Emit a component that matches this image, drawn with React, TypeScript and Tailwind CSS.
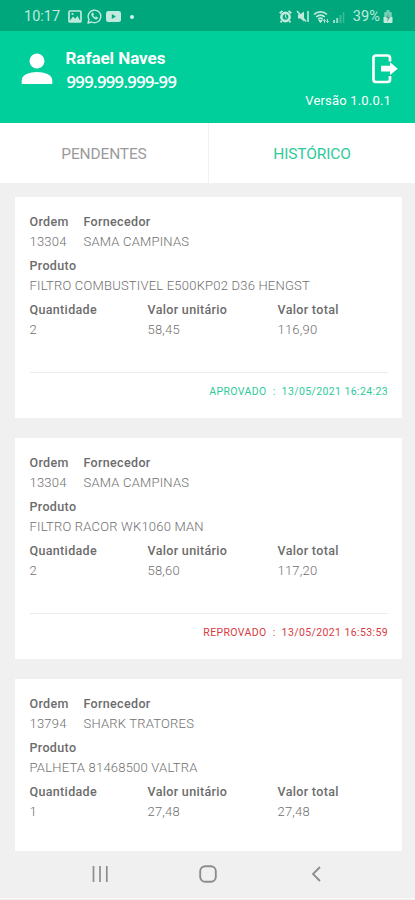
import React from "react";

type Order = {
  ordem: string;
  fornecedor: string;
  produto: string;
  quantidade: string;
  unitario: string;
  total: string;
  status?: { label: string; date: string; tone: string };
};

const orders: Order[] = [
  {
    ordem: "13304",
    fornecedor: "SAMA CAMPINAS",
    produto: "FILTRO COMBUSTIVEL E500KP02 D36 HENGST",
    quantidade: "2",
    unitario: "58,45",
    total: "116,90",
    status: { label: "APROVADO", date: "13/05/2021 16:24:23", tone: "text-[#2ccb9b]" },
  },
  {
    ordem: "13304",
    fornecedor: "SAMA CAMPINAS",
    produto: "FILTRO RACOR WK1060 MAN",
    quantidade: "2",
    unitario: "58,60",
    total: "117,20",
    status: { label: "REPROVADO", date: "13/05/2021 16:53:59", tone: "text-[#d83a40]" },
  },
  {
    ordem: "13794",
    fornecedor: "SHARK TRATORES",
    produto: "PALHETA 81468500 VALTRA",
    quantidade: "1",
    unitario: "27,48",
    total: "27,48",
  },
];

function Field({ label, value, className = "" }: { label: string; value: string; className?: string }) {
  return (
    <div className={`whitespace-nowrap ${className}`}>
      <div className="h-5 text-[12.5px] font-medium leading-5 tracking-[0.34px] text-[#6c6c6c]">{label}</div>
      <div className="h-5 text-[13px] font-light leading-[19px] tracking-[0.21px] text-[#707070]">{value}</div>
    </div>
  );
}

function OrderCard({ order }: { order: Order }) {
  return (
    <article className="h-[221px] shrink-0 bg-white pl-[14.5px] pr-[14px] pt-[15px]">
      <div className="flex flex-col gap-1">
        <div className="flex">
          <Field label="Ordem" value={order.ordem} className="w-[54px]" />
          <Field label="Fornecedor" value={order.fornecedor} />
        </div>
        <Field label="Produto" value={order.produto} />
        <div className="flex">
          <Field label="Quantidade" value={order.quantidade} className="w-[118px]" />
          <Field label="Valor unitário" value={order.unitario} className="w-[130px]" />
          <Field label="Valor total" value={order.total} />
        </div>
      </div>
      {order.status && (
        <div
          className={`mt-[32px] flex h-[38px] items-center justify-end whitespace-pre border-t border-[#ececec] text-[10.5px] tracking-[0.39px] ${order.status.tone}`}
        >
          {order.status.label}  :  {order.status.date}
        </div>
      )}
    </article>
  );
}

function StatusBar() {
  return (
    <div className="flex h-[31px] shrink-0 items-center justify-between bg-[#00a67c] pl-6 pr-[22px] pt-[2px] text-[#bfeadd]">
      <div className="flex items-center">
        <span className="w-[44px] text-[14.5px]">10:17</span>
        <svg className="h-[13px] w-[14px]" viewBox="0 0 14 13" fill="none">
          <rect x="1" y="1" width="12" height="11" rx="1" stroke="currentColor" strokeWidth="1.7" />
          <path d="M2 10.5 5 6.5l2.2 2.3L9.500 6l2.500 4.500V12H2z" fill="currentColor" />
          <circle cx="4.500" cy="4" r="1.100" fill="currentColor" />
        </svg>
        <svg className="ml-[5px] h-[15px] w-[15px]" viewBox="0 0 15 15" fill="none" stroke="currentColor">
          <path d="M1 14l1-3.500A6.300 6.300 0 1 1 4.600 13z" strokeWidth="1.400" strokeLinejoin="round" />
          <path d="M5 4.200c-1 1.200-.2 2.900 1.200 4.300 1.500 1.400 3 2.200 4.200 1.200l.4-1-1.700-1-.9.8C7 8 6.300 7.200 6 6.200l.7-.8L6 3.800z" fill="currentColor" strokeWidth=".5" />
        </svg>
        <svg className="ml-[4px] h-[11px] w-[15px]" viewBox="0 0 15 11">
          <rect width="15" height="11" rx="2.500" fill="currentColor" />
          <path d="M5.800 3v5l4-2.500z" fill="#00a67c" />
        </svg>
        <span className="ml-[9px] h-1 w-1 rounded-full bg-[#d5f3ea]" />
      </div>
      <div className="flex items-center">
        <svg className="h-[13px] w-[13px]" viewBox="0 0 13 13" fill="none" stroke="currentColor">
          <circle cx="6.500" cy="7" r="4.100" strokeWidth="2.600" />
          <path d="M.7 3.300 3.500.9M12.300 3.300 9.500.9M2.800 10.800l-1.300 1.500M10.200 10.800l1.300 1.500" strokeWidth="1.800" />
          <path d="M6.500 4.700V7.300l1.600 1" strokeWidth="1" />
        </svg>
        <svg className="ml-1 h-[13px] w-[14px]" viewBox="0 0 14 13" fill="none" stroke="currentColor">
          <path d="M2 4.500h2L8 1.500v10L4.500 8.500H2z" fill="currentColor" stroke="none" />
          <path d="M1 1l9 10.500" strokeWidth="1.500" />
          <path d="M12 1v11" strokeWidth="1.600" />
        </svg>
        <svg className="ml-[3px] h-[14px] w-[17px]" viewBox="0 0 17 14" fill="none" stroke="currentColor">
          <path d="M1 4.500C4.500 1 10.500 1 14 4.500M3.200 7c2.500-2.500 6.200-2.500 8.600 0M5.200 9.300c1.500-1.400 3.200-1.400 4.600 0" strokeWidth="1.700" />
          <path d="M7.500 12.500 5.800 10.500h3.400z" fill="currentColor" />
          <path d="M11.500 13V9.500m-1.300 1.400 1.300-1.400 1.300 1.400M14.500 9v3.500m-1.300-1.400 1.300 1.400 1.300-1.400" strokeWidth=".9" />
        </svg>
        <svg className="ml-[3px] h-[12px] w-[12px]" viewBox="0 0 12 12">
          <path d="M0 9h2v3H0zM3.200 7h2v5h-2z" fill="currentColor" opacity=".8" />
          <path d="M6.500 4h2v8h-2zM9.800 1h1.500v11H9.800z" fill="currentColor" opacity=".3" />
        </svg>
        <span className="ml-[8px] text-[14.5px] tracking-[0.1px]">39%</span>
        <svg className="ml-[3px] h-[13px] w-[10px]" viewBox="0 0 10 13">
          <path d="M3.500 0h3v2H8q.8 0 .8.800V7H1.200V2.800Q1.200 2 2 2h1.500z" fill="currentColor" opacity=".6" />
          <path d="M.5 7h9v5q0 1-1 1h-7q-1 0-1-1z" fill="currentColor" />
          <path d="M5.500 3.500 3 8h1.700L4.200 11.500 7.200 7H5.300z" fill="#53a18b" />
        </svg>
      </div>
    </div>
  );
}

function Header() {
  return (
    <header className="flex h-[92px] shrink-0 justify-between bg-[#00ce9b] pl-[21px] pr-[17px] text-white">
      <div className="flex">
        <svg className="mt-[22px] h-[32px] w-[32px]" viewBox="0 0 32 32" fill="currentColor">
          <circle cx="16" cy="8" r="7.500" />
          <path d="M.7 31v-3.800C.7 21.800 8.500 19 16 19s15.300 2.800 15.300 8.200V31z" />
        </svg>
        <div className="ml-[12.500px] whitespace-nowrap pt-[17px]">
          <div className="h-[21px] text-[17px] font-bold leading-[21px] tracking-[-0.05px]">Rafael Naves</div>
          <div className="h-[25px] pl-px font-['Open_Sans',sans-serif] text-[16.5px] font-semibold leading-[25px] tracking-[-0.6px]">
            999.999.999-99
          </div>
        </div>
      </div>
      <div className="flex flex-col items-end pt-[23px]">
        <svg className="h-[30px] w-[27px]" viewBox="0 0 27 30" fill="none">
          <path d="M19 7.500V4Q19 1.500 16.500 1.500H5Q2.500 1.500 2.500 4v21.500Q2.500 28 5 28h11.500q2.500 0 2.500-2.500V22" stroke="currentColor" strokeWidth="2.700" />
          <path d="M10 11.800h9V8.300L26.800 14.800l-7.800 6.200v-3.500h-9z" fill="currentColor" />
        </svg>
        <div className="mr-[7px] mt-[8px] h-[18px] whitespace-nowrap text-[13px] leading-[18px] tracking-[0.18px]">Versão 1.0.0.1</div>
      </div>
    </header>
  );
}

export default function App() {
  return (
    <div className="flex h-[900px] w-[415px] flex-col overflow-hidden bg-[#f0f0f0] font-['Roboto',sans-serif]">
      <StatusBar />
      <Header />
      <nav className="flex h-[60px] shrink-0 bg-white text-[15.5px] tracking-[-0.15px]">
        <div className="flex w-[209px] items-center justify-center border-r border-[#f1f1f1] pt-[4px] text-[#9b9b9b]">PENDENTES</div>
        <div className="flex flex-1 items-center justify-center pt-[4px] text-[#2ccb9b]">HISTÓRICO</div>
      </nav>
      <main className="flex h-[668px] shrink-0 flex-col gap-[20px] overflow-hidden pl-[15px] pr-[13px] pt-[14px]">
        {orders.map((order) => (
          <OrderCard key={order.produto} order={order} />
        ))}
      </main>
      <footer className="flex h-[48px] shrink-0 items-center border-b border-[#fafafa] pb-[2px] pl-[92px] text-[#8d8d8d]">
        <svg className="h-4 w-4" viewBox="0 0 16 16" stroke="currentColor" strokeWidth="1.700">
          <path d="M1.500 0v16M8 0v16M14.800 0v16" />
        </svg>
        <svg className="ml-[91px] h-[18px] w-[18px]" viewBox="0 0 18 18" fill="none" stroke="currentColor" strokeWidth="1.900">
          <rect x="1.200" y="1.200" width="15.600" height="15.600" rx="5" />
        </svg>
        <svg className="ml-[94px] h-4 w-[10px]" viewBox="0 0 10 16" fill="none" stroke="currentColor" strokeWidth="1.800">
          <path d="M9 1 2 8l7 7" />
        </svg>
      </footer>
    </div>
  );
}
